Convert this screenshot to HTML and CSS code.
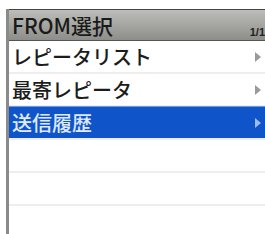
FILE: index.html
```html
<!DOCTYPE html>
<html>
<head>
    <meta charset="UTF-8">
    <title>FROM選択</title>
    <link rel="stylesheet" href="styles.css">
</head>
<body>
    <div class="screen">
        <div class="title-bar">
            <span class="title">FROM選択</span>
            <span class="page">1/1</span>
        </div>
        <ul class="menu">
            <li class="item">レピータリスト<span class="arrow"></span></li>
            <li class="item">最寄レピータ<span class="arrow"></span></li>
            <li class="item selected">送信履歴<span class="arrow"></span></li>
            <li class="item"></li>
            <li class="item"></li>
            <li class="item"></li>
        </ul>
    </div>
</body>
</html>
```

FILE: styles.css
```css
body {
    margin: 0;
    padding: 9px 0 0 6px;
    background-color: #ffffff;
    font-family: "Noto Sans CJK JP", "Liberation Sans", sans-serif;
}
.screen {
    border-left: 3px solid #8a8a8a;
    height: 225px;
    overflow: hidden;
}
.title-bar {
    height: 30px;
    display: flex;
    align-items: flex-end;
    justify-content: space-between;
    padding: 0 0 0 3px;
    border-top: 1px solid #444444;
    border-bottom: 1px solid #555555;
    background: linear-gradient(#bdbeb9, #8d8e89);
}
.title {
    font-size: 21px;
    line-height: 29px;
    font-weight: 500;
    color: #1a1a1a;
}
.page {
    font-size: 11px;
    font-weight: bold;
    color: #222222;
    line-height: 16px;
    font-family: "Liberation Sans", sans-serif;
}
.menu {
    list-style: none;
    margin: 0;
    padding: 0;
}
.item {
    height: 31px;
    display: flex;
    align-items: center;
    justify-content: space-between;
    padding-left: 3px;
    font-size: 20px;
    font-weight: 500;
    color: #1c1c1c;
    border-bottom: 2px solid #eeeeee;
}
.selected {
    background-color: #0f55c9;
    color: #dfe9ff;
    border-top: 1px solid #6f9be4;
    margin-top: -1px;
}
.arrow {
    width: 0;
    height: 0;
    margin-right: 4px;
    border-top: 5px solid transparent;
    border-bottom: 5px solid transparent;
    border-left: 6px solid #9a9a9a;
}
.selected .arrow {
    border-left-color: #9fbbe8;
}
```
